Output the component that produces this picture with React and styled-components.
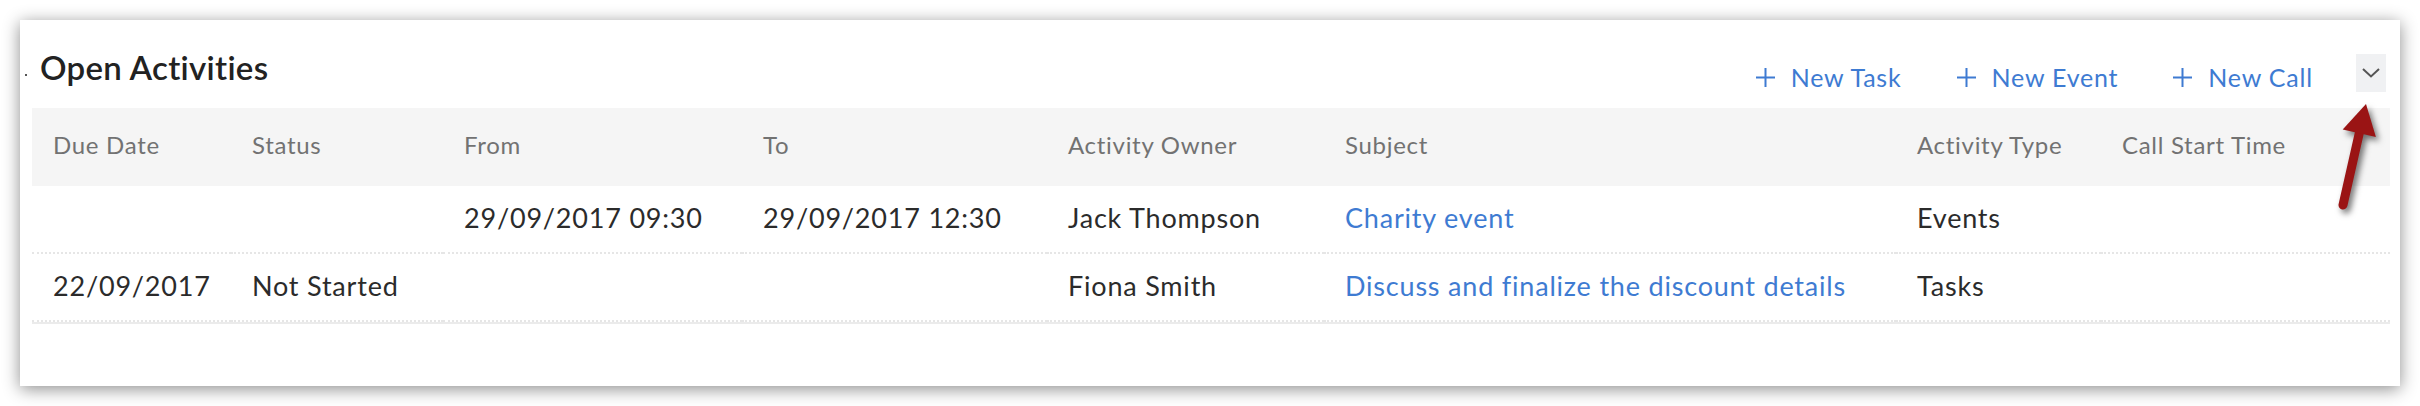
import React from "react";
import styled, { createGlobalStyle } from "styled-components";

const Global = createGlobalStyle`
  html, body { margin: 0; padding: 0; background: #ffffff; }
  body { font-family: Lato, "Liberation Sans", sans-serif; }
`;

const Page = styled.div`
  position: relative;
  width: 2420px;
  height: 406px;
  padding: 20px 20px 0 20px;
  box-sizing: border-box;
`;

const Card = styled.section`
  width: 2380px;
  height: 366px;
  background: #fff;
  box-shadow: 0 3px 16px rgba(0, 0, 0, 0.45);
  box-sizing: border-box;
  padding: 0 10px 0 12px;
`;

const TitleBar = styled.div`
  height: 88px;
  display: flex;
  align-items: flex-start;
  justify-content: space-between;
`;

const Title = styled.h2`
  position: relative;
  margin: 27px 0 0 8px;
  font-size: 33px;
  line-height: 40px;
  font-weight: 600;
  letter-spacing: 0.3px;
  color: #222;
  &::before {
    content: "";
    position: absolute;
    left: -15px;
    top: 27px;
    width: 2px;
    height: 2px;
    background: #555;
  }
`;

const Actions = styled.div`
  display: flex;
  align-items: flex-start;
  margin-top: 34px;
  margin-right: 4px;
`;

const ActionLink = styled.a`
  display: flex;
  align-items: center;
  gap: 16px;
  height: 38px;
  padding-top: 8px;
  box-sizing: border-box;
  margin-right: 55px;
  color: #3e7bd2;
  font-size: 25px;
  letter-spacing: 0.8px;
  text-decoration: none;
  &:last-of-type { margin-right: 43px; }
`;

const ToggleBox = styled.button`
  width: 30px;
  height: 38px;
  border: none;
  padding: 0;
  background: #f0f1f3;
  display: flex;
  align-items: center;
  justify-content: center;
`;

const Grid = styled.div`
  display: grid;
  grid-template-columns: 199px 212px 299px 305px 277px 572px 205px 1fr;
  border-bottom: 2px solid #ebebeb;
`;

const HeadCell = styled.div`
  height: 78px;
  display: flex;
  align-items: center;
  padding-left: 21px;
  padding-bottom: 5px;
  box-sizing: border-box;
  background: #f5f5f5;
  color: #727272;
  font-size: 24px;
  letter-spacing: 0.7px;
`;

const Cell = styled.div`
  height: 68px;
  display: flex;
  align-items: center;
  padding-left: 21px;
  padding-bottom: 3px;
  box-sizing: border-box;
  border-bottom: 2px dotted #e6e6e6;
  color: ${(p) => (p.$link ? "#3e7bd2" : "#2b2b2b")};
  font-size: 27px;
  letter-spacing: 0.8px;
  white-space: nowrap;
`;

const ArrowLayer = styled.svg`
  position: absolute;
  left: 2320px;
  top: 90px;
  width: 80px;
  height: 130px;
  overflow: visible;
  filter: drop-shadow(3px 4px 3px rgba(0, 0, 0, 0.55));
`;

const PlusIcon = () => (
  <svg width="19" height="19" viewBox="0 0 19 19">
    <path d="M9.5 0 V19 M0 9.5 H19" stroke="#3e7bd2" strokeWidth="2" fill="none" />
  </svg>
);

const Chevron = () => (
  <svg width="18" height="10" viewBox="0 0 18 10">
    <path d="M1 1 L9 8.5 L17 1" stroke="#555" strokeWidth="2" fill="none" />
  </svg>
);

const headers = [
  "Due Date",
  "Status",
  "From",
  "To",
  "Activity Owner",
  "Subject",
  "Activity Type",
  "Call Start Time",
];

const rows = [
  ["", "", "29/09/2017 09:30", "29/09/2017 12:30", "Jack Thompson", "Charity event", "Events", ""],
  ["22/09/2017", "Not Started", "", "", "Fiona Smith", "Discuss and finalize the discount details", "Tasks", ""],
];

export default function App() {
  return (
    <>
      <Global />
      <Page>
        <Card>
          <TitleBar>
            <Title>Open Activities</Title>
            <Actions>
              <ActionLink href="#"><PlusIcon />New Task</ActionLink>
              <ActionLink href="#"><PlusIcon />New Event</ActionLink>
              <ActionLink href="#"><PlusIcon />New Call</ActionLink>
              <ToggleBox aria-label="toggle"><Chevron /></ToggleBox>
            </Actions>
          </TitleBar>
          <Grid>
            {headers.map((h) => (
              <HeadCell key={h}>{h}</HeadCell>
            ))}
            {rows.map((r, i) =>
              r.map((c, j) => (
                <Cell key={`${i}-${j}`} $link={j === 5}>
                  {c}
                </Cell>
              ))
            )}
          </Grid>
        </Card>
        <ArrowLayer viewBox="0 0 80 130">
          <line x1="23" y1="115" x2="40" y2="40" stroke="#9a1414" strokeWidth="9" strokeLinecap="round" />
          <polygon points="46,14 22.7,39.4 55.9,47" fill="#9a1414" />
        </ArrowLayer>
      </Page>
    </>
  );
}
